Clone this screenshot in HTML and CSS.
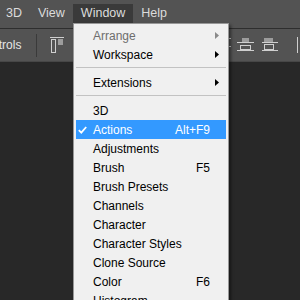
FILE: index.html
```html
<!DOCTYPE html>
<html>
<head>
<meta charset="utf-8">
<link rel="stylesheet" href="styles.css">
</head>
<body>
<div class="app">
  <div class="menubar">
    <span class="mb-item">3D</span>
    <span class="mb-item">View</span>
    <span class="mb-item active">Window</span>
    <span class="mb-item">Help</span>
  </div>
  <div class="toolbar">
    <span class="tb-label">Show Transform Controls</span>
    <span class="tb-sep"></span>
    <svg class="tb-icon icon-a" width="14" height="16" viewBox="0 0 14 16">
      <rect x="0" y="0" width="14" height="1" fill="#cfcfcf"/>
      <rect x="1.5" y="2.5" width="4" height="13" fill="none" stroke="#cfcfcf"/>
      <rect x="8" y="2" width="5" height="6" fill="#9c9c9c"/>
    </svg>
    <svg class="tb-icon icon-p" width="4" height="16" viewBox="0 0 4 16">
      <rect x="0" y="5" width="4" height="1" fill="#cfcfcf"/>
    </svg>
    <span class="tb-spacer"></span>
    <svg class="tb-icon icon-q" width="3" height="16" viewBox="0 0 3 16">
      <rect x="0" y="1" width="3" height="1" fill="#cfcfcf"/>
      <rect x="0" y="9" width="3" height="1" fill="#cfcfcf"/>
    </svg>
    <svg class="tb-icon icon-b" width="17" height="16" viewBox="0 0 17 16">
      <rect x="5" y="1" width="7" height="5" fill="#9c9c9c"/>
      <rect x="0" y="5" width="17" height="1" fill="#cfcfcf"/>
      <rect x="3.5" y="8.5" width="10" height="4" fill="none" stroke="#cfcfcf"/>
      <rect x="0" y="13" width="17" height="1" fill="#cfcfcf"/>
    </svg>
    <svg class="tb-icon icon-c" width="16" height="16" viewBox="0 0 16 16">
      <rect x="2" y="1" width="9" height="4" fill="#9c9c9c"/>
      <rect x="0" y="5" width="16" height="1" fill="#cfcfcf"/>
      <rect x="2.5" y="7.5" width="9" height="5" fill="none" stroke="#cfcfcf"/>
      <rect x="0" y="13" width="16" height="1" fill="#cfcfcf"/>
    </svg>
    <svg class="tb-icon icon-d" width="3" height="16" viewBox="0 0 3 16">
      <rect x="0" y="0" width="1" height="16" fill="#cfcfcf"/>
    </svg>
  </div>
  <div class="canvas"></div>

  <div class="menu">
    <div class="row disabled"><span class="chk"></span><span class="lbl">Arrange</span><span class="key"></span><span class="sub"><svg width="4" height="7" viewBox="0 0 4 7"><path d="M0 0L4 3.5L0 7Z" fill="#8a8a8a"/></svg></span></div>
    <div class="row"><span class="chk"></span><span class="lbl">Workspace</span><span class="key"></span><span class="sub"><svg width="4" height="7" viewBox="0 0 4 7"><path d="M0 0L4 3.5L0 7Z" fill="#000"/></svg></span></div>
    <div class="sep"></div>
    <div class="row"><span class="chk"></span><span class="lbl">Extensions</span><span class="key"></span><span class="sub"><svg width="4" height="7" viewBox="0 0 4 7"><path d="M0 0L4 3.5L0 7Z" fill="#000"/></svg></span></div>
    <div class="sep"></div>
    <div class="row"><span class="chk"></span><span class="lbl">3D</span><span class="key"></span><span class="sub"></span></div>
    <div class="row hl"><span class="chk"><svg width="9" height="8" viewBox="0 0 9 8"><path d="M0.8 4.2L3.3 6.6L8.2 1" fill="none" stroke="#fff" stroke-width="1.8"/></svg></span><span class="lbl">Actions</span><span class="key">Alt+F9</span><span class="sub"></span></div>
    <div class="row"><span class="chk"></span><span class="lbl">Adjustments</span><span class="key"></span><span class="sub"></span></div>
    <div class="row"><span class="chk"></span><span class="lbl">Brush</span><span class="key">F5</span><span class="sub"></span></div>
    <div class="row"><span class="chk"></span><span class="lbl">Brush Presets</span><span class="key"></span><span class="sub"></span></div>
    <div class="row"><span class="chk"></span><span class="lbl">Channels</span><span class="key"></span><span class="sub"></span></div>
    <div class="row"><span class="chk"></span><span class="lbl">Character</span><span class="key"></span><span class="sub"></span></div>
    <div class="row"><span class="chk"></span><span class="lbl">Character Styles</span><span class="key"></span><span class="sub"></span></div>
    <div class="row"><span class="chk"></span><span class="lbl">Clone Source</span><span class="key"></span><span class="sub"></span></div>
    <div class="row"><span class="chk"></span><span class="lbl">Color</span><span class="key">F6</span><span class="sub"></span></div>
    <div class="row"><span class="chk"></span><span class="lbl">Histogram</span><span class="key"></span><span class="sub"></span></div>
  </div>
</div>
</body>
</html>
```
FILE: styles.css
```css
html, body {
  margin: 0;
  padding: 0;
  background: #282828;
}
.app {
  position: relative;
  width: 300px;
  height: 300px;
  overflow: hidden;
  font-family: "Liberation Sans", Arial, sans-serif;
  display: flex;
  flex-direction: column;
}
.menubar {
  height: 24px;
  padding-top: 4px;
  background: #535353;
  display: flex;
  align-items: flex-start;
  flex-shrink: 0;
}
.mb-item {
  height: 19px;
  line-height: 19px;
  font-size: 12.5px;
  color: #dcdcdc;
  padding: 0 8px;
}
.mb-item:first-child {
  margin-left: -2px;
}
.mb-item.active {
  background: #3a3a3a;
}
.toolbar {
  height: 32px;
  border-top: 1px solid #2e2e2e;
  border-bottom: 1px solid #474747;
  background: #535353;
  display: flex;
  align-items: center;
  flex-shrink: 0;
}
.tb-label {
  font-size: 12px;
  color: #e6e6e6;
  white-space: nowrap;
  margin-left: -114px;
}
.tb-sep {
  width: 1px;
  height: 23px;
  background: #3a3a3a;
  margin-left: 15px;
}
.icon-a {
  margin-left: 13px;
}
.icon-p {
  margin-left: 9px;
}
.tb-spacer {
  flex: 1;
}
.icon-q {
  margin-right: 6px;
}
.icon-b {
  margin-right: 8px;
}
.icon-c {
  margin-right: 19px;
}
.canvas {
  flex: 1;
  background: #282828;
}
.menu {
  position: absolute;
  left: 73px;
  top: 23px;
  width: 150px;
  padding: 2px;
  border: 1px solid #979797;
  background: #f0f0f0;
  box-shadow: 2px 2px 3px rgba(0, 0, 0, 0.45);
  font-size: 12px;
  color: #000;
}
.row {
  height: 19px;
  display: flex;
  align-items: center;
}
.row.hl {
  background: #3399ff;
  color: #fff;
}
.row.disabled {
  color: #6d6d6d;
}
.chk {
  width: 17px;
  display: flex;
  align-items: center;
  padding-left: 2px;
  box-sizing: border-box;
}
.chk svg {
  display: block;
}
.lbl {
  flex: 1;
  white-space: nowrap;
}
.key {
  white-space: nowrap;
}
.sub {
  width: 16px;
  display: flex;
  align-items: center;
  padding-left: 5px;
  box-sizing: border-box;
}
.sub svg {
  display: block;
}
.sep {
  height: 1px;
  margin: 3px 0 5px;
  background: #c2c2c2;
}
```
